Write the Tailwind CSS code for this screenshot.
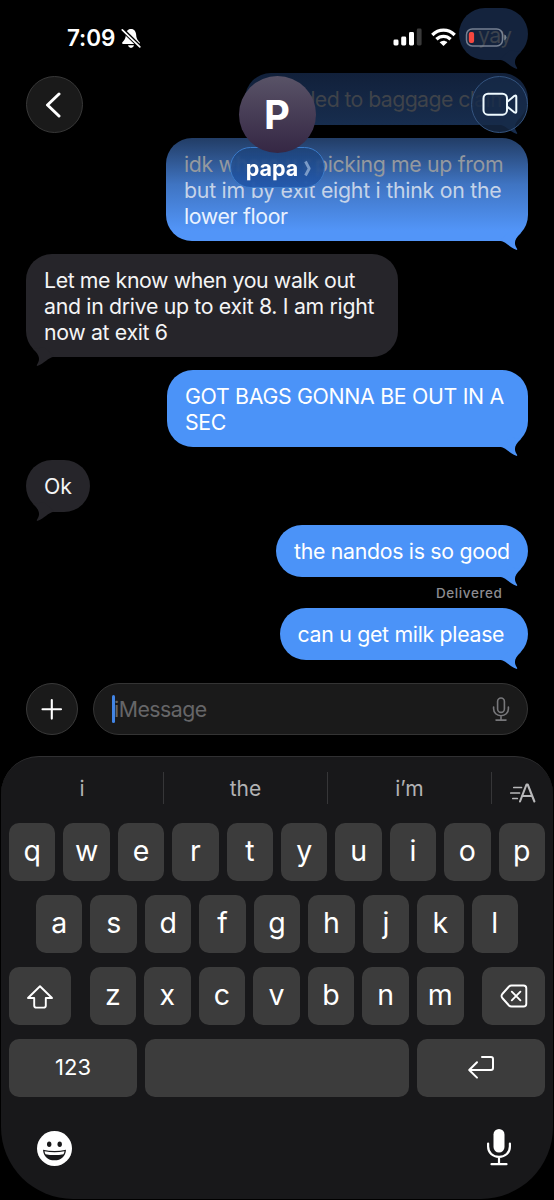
<!DOCTYPE html>
<html lang="en">
<head>
<meta charset="utf-8">
<title>Messages</title>
<script src="https://cdn.jsdelivr.net/npm/@tailwindcss/browser@4"></script>
</head>
<body class="bg-black">
<svg class="hidden">
  <symbol id="tail" viewBox="0 0 28 24"><path d="M0 13.800C6 14.500 9.500 20.500 16.200 22.800C17.600 23.200 17.400 22.100 16.600 20.900C13.800 16.500 14.200 12.500 20.600 6.200L10 4Z"/></symbol>
</svg>
<div class="relative flex h-[1200px] w-[554px] flex-col overflow-hidden bg-black font-[Inter,'Liberation_Sans',sans-serif] text-white">

  <!-- Conversation -->
  <main class="flex h-[683px] flex-col gap-[13px] px-[26px] pt-2 text-[21.3px] leading-[25.8px] whitespace-nowrap">
    <div class="relative h-[52px] w-[69px] shrink-0 self-end rounded-[26px] bg-[#14233d] pt-[15px] pl-[19px] text-[#3b424d] tracking-[-0.7px]">yay
      <svg class="absolute right-0 -bottom-[10px] h-6 w-7 fill-[#14233d]"><use href="#tail"/></svg>
    </div>
    <div class="relative h-[52px] w-[283px] shrink-0 self-end rounded-[26px] bg-linear-to-b from-[#11203a] to-[#172d4e] pt-[14px] pl-[22px] text-[#3f434a] tracking-[-0.6px]">headed to baggage claim
      <svg class="absolute right-0 -bottom-[10px] h-6 w-7 fill-[#172d4e]"><use href="#tail"/></svg>
    </div>
    <div class="relative h-[103px] w-[362px] shrink-0 self-end rounded-[26px] bg-linear-to-b from-[#223d66] via-[#3f74c2] via-45% to-[#5295f8] to-90% px-[18px] pt-[14px]">
      <div class="text-[#94999f] tracking-[-0.35px]"><span class="inline-block w-[131px]">idk where u r</span>picking me up from</div>
      <div class="text-[#c5d3e8] tracking-[-0.25px]">but im by exit eight i think on the</div>
      <div class="text-[#e9f2ff] tracking-[-0.35px]">lower floor</div>
      <svg class="absolute right-0 -bottom-[10px] h-6 w-7 fill-[#5295f8]"><use href="#tail"/></svg>
    </div>
    <div class="relative h-[103px] w-[372px] shrink-0 self-start rounded-[26px] bg-[#26252a] px-[18px] pt-[14px] text-[#f4f4f5]">
      <div class="tracking-[-0.41px]">Let me know when you walk out</div>
      <div class="tracking-[-0.32px]">and in drive up to exit 8. I am right</div>
      <div class="tracking-[-0.35px]">now at exit 6</div>
      <svg class="absolute left-0 -bottom-[10px] h-6 w-7 -scale-x-100 fill-[#26252a]"><use href="#tail"/></svg>
    </div>
    <div class="relative h-[77px] w-[361px] shrink-0 self-end rounded-[26px] bg-[#4b93f8] px-[18px] pt-[14px]">
      <div class="tracking-[-0.3px]">GOT BAGS GONNA BE OUT IN A</div>
      <div class="tracking-[-0.3px]">SEC</div>
      <svg class="absolute right-0 -bottom-[10px] h-6 w-7 fill-[#4b93f8]"><use href="#tail"/></svg>
    </div>
    <div class="relative h-[52px] w-[64px] shrink-0 self-start rounded-[26px] bg-[#26252a] px-[18px] pt-[14px] text-[#f4f4f5]">Ok
      <svg class="absolute left-0 -bottom-[10px] h-6 w-7 -scale-x-100 fill-[#26252a]"><use href="#tail"/></svg>
    </div>
    <div class="relative h-[52px] w-[252px] shrink-0 self-end rounded-[26px] bg-[#4b93f8] px-[18px] pt-[14px] tracking-[-0.3px]">the nandos is so good
      <svg class="absolute right-0 -bottom-[10px] h-6 w-7 fill-[#4b93f8]"><use href="#tail"/></svg>
    </div>
    <div class="-my-[5px] mr-[25.5px] h-[15px] shrink-0 self-end text-[13.5px] leading-[16px] font-medium tracking-[0.6px] text-[#8c8c91]">Delivered</div>
    <div class="relative h-[52px] w-[248.5px] shrink-0 self-end rounded-[26px] bg-[#4b93f8] px-[18px] pt-[14px] tracking-[-0.3px]">can u get milk please
      <svg class="absolute right-0 -bottom-[10px] h-6 w-7 fill-[#4b93f8]"><use href="#tail"/></svg>
    </div>
  </main>

  <!-- Composer -->
  <div class="flex h-[73px] shrink-0 items-start gap-[15px] px-[26px]">
    <div class="flex size-[52px] items-center justify-center rounded-full border border-[#393939] bg-[#1a1a1a]">
      <svg class="size-6" viewBox="0 0 24 24" fill="none" stroke="#fff" stroke-width="2.1" stroke-linecap="round"><path d="M2.500 12.300H21M11.800 3V21.600"/></svg>
    </div>
    <div class="flex h-[52px] flex-1 items-center rounded-[26px] border border-[#343434] bg-[#1a1a1a] pl-[18px] pr-[17px]">
      <div class="h-[28px] w-[3px] rounded-sm bg-[#4285e6]"></div>
      <div class="-ml-px text-[21.3px] leading-7 tracking-[-0.5px] text-[#666668]">iMessage</div>
      <svg class="ml-auto h-[26px] w-[18px]" viewBox="0 0 18 26" fill="none" stroke="#77777a" stroke-width="1.6" stroke-linecap="round"><rect x="5.6" y="2" width="6.8" height="14.4" rx="3.4"/><path d="M1.6 11v1.7c0 4.2 3.2 7 7.4 7s7.400-2.800 7.400-7V11M9 19.800V24M4 24.100H14"/></svg>
    </div>
  </div>

  <!-- Keyboard -->
  <section class="mx-px flex h-[443px] shrink-0 flex-col rounded-t-[38px] rounded-b-[72px] border-t border-[#303032] bg-[#18181a]">
    <div class="flex h-[66px] items-start pt-[15px] text-[21px] leading-[34px] text-[#b2b2b4]">
      <div class="h-8 w-[163px] border-r border-[#363638] text-center">i</div>
      <div class="h-8 w-[164px] border-r border-[#363638] text-center">the</div>
      <div class="h-8 w-[164px] border-r border-[#363638] text-center">i’m</div>
      <svg class="mt-[9px] ml-[17px] h-[24px] w-[28px]" viewBox="0 0 28 24" fill="none" stroke="#b8b8ba" stroke-width="2.100" stroke-linecap="round" stroke-linejoin="round"><path d="M11 20.500L17.500 3.500H18.700L25.400 20.500M13 15H23"/><path stroke-width="1.700" d="M4.800 6.500H12.500M1.800 12H10.500M3.800 17.500H8.300"/></svg>
    </div>
    <div class="flex flex-col gap-[14px] px-2 text-[28.500px] leading-[55px]">
      <div class="grid h-[58px] grid-cols-10 gap-2 text-center">
        <div class="rounded-[10px] bg-[#3c3c3c]">q</div><div class="rounded-[10px] bg-[#3c3c3c]">w</div><div class="rounded-[10px] bg-[#3c3c3c]">e</div><div class="rounded-[10px] bg-[#3c3c3c]">r</div><div class="rounded-[10px] bg-[#3c3c3c]">t</div><div class="rounded-[10px] bg-[#3c3c3c]">y</div><div class="rounded-[10px] bg-[#3c3c3c]">u</div><div class="rounded-[10px] bg-[#3c3c3c]">i</div><div class="rounded-[10px] bg-[#3c3c3c]">o</div><div class="rounded-[10px] bg-[#3c3c3c]">p</div>
      </div>
      <div class="grid h-[58px] grid-cols-9 gap-2 px-[27px] text-center">
        <div class="rounded-[10px] bg-[#3c3c3c]">a</div><div class="rounded-[10px] bg-[#3c3c3c]">s</div><div class="rounded-[10px] bg-[#3c3c3c]">d</div><div class="rounded-[10px] bg-[#3c3c3c]">f</div><div class="rounded-[10px] bg-[#3c3c3c]">g</div><div class="rounded-[10px] bg-[#3c3c3c]">h</div><div class="rounded-[10px] bg-[#3c3c3c]">j</div><div class="rounded-[10px] bg-[#3c3c3c]">k</div><div class="rounded-[10px] bg-[#3c3c3c]">l</div>
      </div>
      <div class="flex h-[58px] justify-between text-center">
        <div class="flex w-[62px] items-center justify-center rounded-[10px] bg-[#3c3c3c]">
          <svg class="mt-px h-[26px] w-[28px]" viewBox="0 0 28 26" fill="none" stroke="#fff" stroke-width="1.9" stroke-linejoin="round"><path d="M14 2.200L26 14H19.800V21.400Q19.800 23.600 17.600 23.600H10.400Q8.200 23.600 8.200 21.400V14H2Z"/></svg>
        </div>
        <div class="grid w-[374px] grid-cols-7 gap-2">
          <div class="rounded-[10px] bg-[#3c3c3c]">z</div><div class="rounded-[10px] bg-[#3c3c3c]">x</div><div class="rounded-[10px] bg-[#3c3c3c]">c</div><div class="rounded-[10px] bg-[#3c3c3c]">v</div><div class="rounded-[10px] bg-[#3c3c3c]">b</div><div class="rounded-[10px] bg-[#3c3c3c]">n</div><div class="rounded-[10px] bg-[#3c3c3c]">m</div>
        </div>
        <div class="flex w-[63px] items-center justify-center rounded-[10px] bg-[#3c3c3c]">
          <svg class="h-[26px] w-[28px]" viewBox="0 0 28 26" fill="none" stroke="#fff" stroke-width="1.900" stroke-linecap="round" stroke-linejoin="round"><path d="M11.500 2.500H23.500Q26.300 2.500 26.300 5.300V20.700Q26.300 23.500 23.500 23.500H11.500Q10 23.500 9 22.500L2.300 15Q0.800 13 2.300 11L9 3.500Q10 2.500 11.500 2.500Z"/><path d="M11.800 8.700L20.400 17.300M20.400 8.700L11.800 17.300"/></svg>
        </div>
      </div>
      <div class="flex h-[58px] gap-2">
        <div class="w-[128px] rounded-[10px] bg-[#3c3c3c] text-center text-[22px] leading-[57px]">123</div>
        <div class="flex-1 rounded-[10px] bg-[#3c3c3c]"></div>
        <div class="flex w-[128px] items-center justify-center rounded-[10px] bg-[#3c3c3c]">
          <svg class="-mt-[2px] h-[26px] w-[28px]" viewBox="0 0 28 26" fill="none" stroke="#fff" stroke-width="2" stroke-linecap="round" stroke-linejoin="round"><path d="M15 3H24Q26 3 26 5V14Q26 16 24 16H2.500M10 8.300L2.200 16L10 23.600"/></svg>
        </div>
      </div>
    </div>
    <div class="flex items-start justify-between pt-[33px] pr-[41px] pl-[36px]">
      <svg class="mt-px size-[35px]" viewBox="0 0 35 35"><circle cx="17.500" cy="17.500" r="17.500" fill="#fff"/><g fill="#18181a"><ellipse cx="12.200" cy="13.200" rx="2.200" ry="2.700"/><ellipse cx="22.700" cy="13.200" rx="2.200" ry="2.700"/><path d="M6 18.700Q17.500 21.400 29 18.700C28.500 25.500 24.200 29.300 17.500 29.300S6.500 25.500 6 18.700Z"/></g><path fill="#fff" d="M7.500 20.200Q17.500 22.400 27.500 20.200Q27.200 22 26.400 23.200Q17.500 24.900 8.600 23.200Q7.800 22 7.500 20.200Z"/></svg>
      <svg class="-mt-[2px] h-[38px] w-[26px]" viewBox="0 0 26 38" fill="none" stroke="#fff" stroke-width="2.200" stroke-linecap="round"><rect x="7.500" y="1" width="11" height="23.500" rx="5.500" fill="#fff" stroke="none"/><path d="M2.100 15.500V18.500C2.100 24.700 6.700 28.800 13 28.800S23.900 24.700 23.900 18.500V15.500M13 29V36M5.500 36.200H20.500"/></svg>
    </div>
  </section>

  <!-- Status bar and header float over the conversation -->
  <header class="absolute inset-x-0 top-0 flex flex-col">
    <div class="flex h-[76px] items-start justify-between pt-[25px] pr-[47px] pl-[67px]">
      <div class="flex items-center gap-[5px]">
        <span class="w-[49px] text-[22.500px] leading-[26px] font-semibold tracking-[-0.100px] whitespace-nowrap">7:09</span>
        <svg class="h-[21px] w-[20px]" viewBox="0 0 20 21"><path fill="#fff" d="M10 1C6.600 1 5 3.700 4.800 7C4.600 11 3 12.500 1.300 14.300Q0.600 16 2 16H18Q19.400 16 18.700 14.300C17 12.500 15.400 11 15.200 7C15 3.700 13.400 1 10 1ZM7 17.300H13Q12.500 20 10 20T7 17.300Z"/><path d="M1.500 1.800L19 18.800" stroke="#000" stroke-width="4"/><path d="M1.300 1.800L18.800 18.800" stroke="#fff" stroke-width="1.700" stroke-linecap="round"/></svg>
      </div>
      <div class="mt-[3px] flex items-start">
        <svg class="h-[19px] w-[29px]" viewBox="0 0 29 19" fill="#fff"><rect x="0.500" y="11.500" width="5" height="6" rx="1.400"/><rect x="8.200" y="8.500" width="5" height="9" rx="1.400"/><rect x="16" y="4" width="5" height="13.500" rx="1.400"/><rect x="23.800" y="0.500" width="4.800" height="17" rx="1.400" fill="#3a3a3a"/></svg>
        <svg class="ml-[9px] h-[19px] w-[25px]" viewBox="0 0 25 19" fill="none" stroke="#fff" stroke-width="3.300"><path d="M1.300 7C7.700 0.500 17.300 0.500 23.700 7"/><path d="M5.400 11.300C9.600 7.400 15.400 7.400 19.600 11.300"/><path fill="#fff" stroke="none" d="M12.500 18L8.600 14.200C11 12.200 14 12.200 16.400 14.200Z"/></svg>
        <svg class="ml-[9px] h-[19px] w-[42px]" viewBox="0 0 42 19"><rect x="1.500" y="0.900" width="36" height="17" rx="5.800" fill="none" stroke="#8791a0" stroke-opacity=".85" stroke-width="1.500"/><rect x="3.800" y="4" width="5.300" height="11" rx="2" fill="#f5473f"/><path d="M39.300 6.500Q41.500 7.300 41.500 9.400T39.300 12.300Z" fill="#7a8490"/></svg>
      </div>
    </div>
    <div class="flex items-start justify-between px-[26px]">
      <div class="flex size-[57px] items-center justify-center rounded-full border border-[#383838] bg-[#1a1a1a]">
        <svg class="mr-[3px] h-[26px] w-[16px]" viewBox="0 0 16 26" fill="none" stroke="#fff" stroke-width="3" stroke-linecap="round" stroke-linejoin="round"><path d="M14 2L2.500 13L14 24"/></svg>
      </div>
      <div class="flex flex-col items-center">
        <div class="z-10 flex size-[77px] items-center justify-center rounded-full bg-linear-to-b from-[#595367] to-[#352744] pt-px text-[40px] font-bold">P</div>
        <div class="-mt-[6px] flex h-[41px] w-[95px] items-center justify-center gap-[6px] rounded-full border border-[#3b7bc9] bg-linear-to-b from-[#1d4378]/85 to-[#2257ab]/95 pt-px pl-[4px] text-[21.500px] font-bold backdrop-blur-[1px]"><span class="tracking-[0px]">papa</span>
          <svg class="h-[17px] w-[8px]" viewBox="0 0 8 17" fill="none" stroke="#7c9cc8" stroke-width="2.800" stroke-linejoin="round"><path d="M1.500 1.500L5.200 8.500L1.500 15.500"/></svg>
        </div>
      </div>
      <div class="flex size-[57px] items-center justify-center rounded-full border border-[#34547f] bg-[#162a49]/80">
        <svg class="h-[25px] w-[36px]" viewBox="0 0 36 25" fill="none" stroke="#eefaff" stroke-width="2" stroke-linejoin="round"><rect x="1.500" y="1.700" width="23.500" height="21" rx="4.500"/><path d="M25 10L32.500 3.800Q34.300 2.800 34.300 4.800V19.500Q34.300 21.500 32.500 20.500L25 14.500"/></svg>
      </div>
    </div>
  </header>
</div>
</body>
</html>
